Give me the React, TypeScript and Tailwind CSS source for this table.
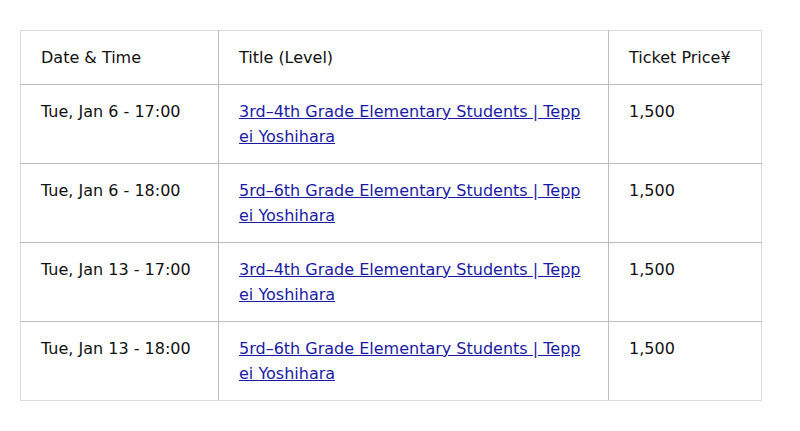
import React from "react";

const rows = [
  ["Tue, Jan 6 - 17:00", "3rd–4th Grade Elementary Students | Teppei Yoshihara"],
  ["Tue, Jan 6 - 18:00", "5rd–6th Grade Elementary Students | Teppei Yoshihara"],
  ["Tue, Jan 13 - 17:00", "3rd–4th Grade Elementary Students | Teppei Yoshihara"],
  ["Tue, Jan 13 - 18:00", "5rd–6th Grade Elementary Students | Teppei Yoshihara"],
];

export default function App() {
  return (
    <div
      className="w-[800px] h-[431px] bg-white pt-[30px] pl-[20px] text-[16px] leading-[25px] text-[#111]"
      style={{ fontFamily: '"DejaVu Sans", sans-serif' }}
    >
      <table className="border-collapse border border-[#dcdcdc] table-fixed w-[741px]">
        <colgroup>
          <col className="w-[198px]" />
          <col className="w-[390px]" />
          <col className="w-[153px]" />
        </colgroup>
        <thead>
          <tr>
            <th className="border border-[#bdbdbd] border-t-[#dcdcdc] border-l-[#dcdcdc] px-5 py-[14px] text-left font-normal align-top">Date &amp; Time</th>
            <th className="border border-[#bdbdbd] border-t-[#dcdcdc] px-5 py-[14px] text-left font-normal align-top">Title (Level)</th>
            <th className="border border-[#bdbdbd] border-t-[#dcdcdc] border-r-[#dcdcdc] px-5 py-[14px] text-left font-normal align-top">Ticket Price¥</th>
          </tr>
        </thead>
        <tbody>
          {rows.map(([d, t], i) => (
            <tr key={i}>
              <td className={`border border-[#bdbdbd] border-l-[#dcdcdc] px-5 py-[14px] align-top ${i === rows.length - 1 ? "border-b-[#dcdcdc]" : ""}`}>{d}</td>
              <td className={`border border-[#bdbdbd] px-5 py-[14px] align-top break-all ${i === rows.length - 1 ? "border-b-[#dcdcdc]" : ""}`}>
                <a href="#" className="text-[#1a1aa6] underline">{t}</a>
              </td>
              <td className={`border border-[#bdbdbd] border-r-[#dcdcdc] px-5 py-[14px] align-top ${i === rows.length - 1 ? "border-b-[#dcdcdc]" : ""}`}>1,500</td>
            </tr>
          ))}
        </tbody>
      </table>
    </div>
  );
}
